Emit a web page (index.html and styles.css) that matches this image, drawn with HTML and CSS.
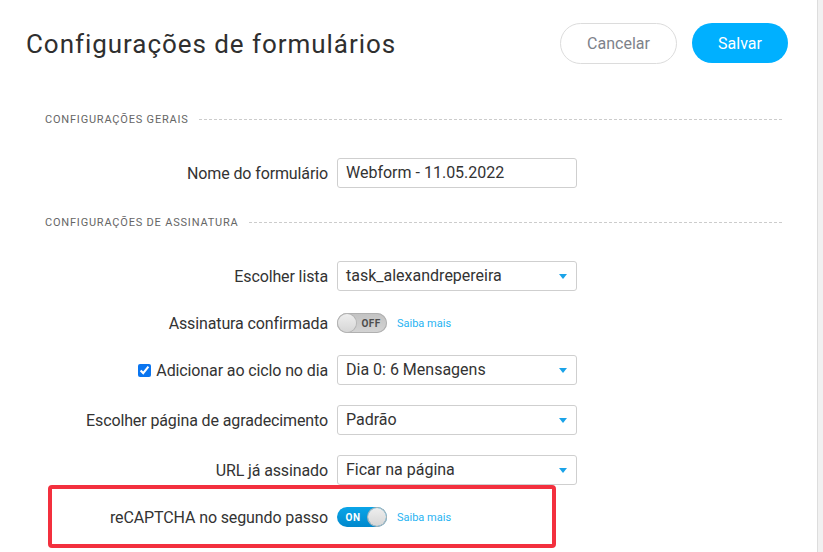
FILE: index.html
```html
<!DOCTYPE html>
<html lang="pt">
<head>
    <meta charset="UTF-8">
    <title>Configurações de formulários</title>
    <link rel="stylesheet" href="styles.css">
</head>
<body>
    <div class="page">
        <header class="header">
            <h1>Configurações de formulários</h1>
            <div class="actions">
                <button class="btn btn-cancel">Cancelar</button>
                <button class="btn btn-save">Salvar</button>
            </div>
        </header>

        <div class="content">
            <div class="section-title"><span>Configurações gerais</span></div>

            <div class="form-row first">
                <label class="label">Nome do formulário</label>
                <div class="field input">Webform - 11.05.2022</div>
            </div>

            <div class="section-title"><span>Configurações de assinatura</span></div>

            <div class="form-row first">
                <label class="label">Escolher lista</label>
                <div class="field select">task_alexandrepereira<span class="arrow"></span></div>
            </div>

            <div class="form-row short">
                <label class="label">Assinatura confirmada</label>
                <div class="toggle off"><span class="knob"></span><span class="state">OFF</span></div>
                <a class="more" href="#">Saiba mais</a>
            </div>

            <div class="form-row">
                <label class="label"><input type="checkbox" checked> Adicionar ao ciclo no dia</label>
                <div class="field select">Dia 0: 6 Mensagens<span class="arrow"></span></div>
            </div>

            <div class="form-row">
                <label class="label">Escolher página de agradecimento</label>
                <div class="field select">Padrão<span class="arrow"></span></div>
            </div>

            <div class="form-row">
                <label class="label">URL já assinado</label>
                <div class="field select">Ficar na página<span class="arrow"></span></div>
            </div>

            <div class="form-row short highlighted">
                <label class="label">reCAPTCHA no segundo passo</label>
                <div class="toggle on"><span class="state">ON</span><span class="knob"></span></div>
                <a class="more" href="#">Saiba mais</a>
            </div>
        </div>
    </div>
</body>
</html>
```

FILE: styles.css
```css
:root {
    --primary: #00b0ff;
    --text: #333;
    --border: #cfcfcf;
    --link: #27b3f2;
}

body {
    margin: 0;
    font-family: Roboto, 'Noto Sans', sans-serif;
    background: #f1f1f1;
    color: var(--text);
    overflow: hidden;
}

.page {
    width: 817px;
    height: 552px;
    background: #fff;
    border-right: 1px solid #ddd;
}

.header {
    display: flex;
    justify-content: space-between;
    align-items: center;
    height: 41px;
    padding: 23px 29px 0 26px;
}

h1 {
    margin: 0;
    font-size: 26px;
    font-weight: 400;
    letter-spacing: 0.95px;
    color: #2f2f2f;
}

.actions {
    display: flex;
    gap: 15px;
}

.btn {
    font-family: inherit;
    font-size: 16px;
    height: 41px;
    border-radius: 21px;
    cursor: pointer;
}

.btn-cancel {
    width: 117px;
    background: #fff;
    color: #7d828a;
    border: 1px solid #dcdcdc;
}

.btn-save {
    width: 96px;
    height: 40px;
    background: var(--primary);
    color: #fff;
    border: none;
}

.content {
    padding: 0 35px 0 45px;
}

.section-title {
    display: flex;
    align-items: center;
    height: 14px;
    margin-top: 48px;
    font-size: 11px;
    letter-spacing: 0.8px;
    text-transform: uppercase;
    color: #666;
}

.section-title + .form-row + .section-title {
    margin-top: 27px;
}

.section-title::after {
    content: "";
    flex: 1;
    margin-left: 10px;
    border-top: 1px dashed #ccc;
}

.form-row {
    display: flex;
    align-items: center;
    height: 30px;
    margin-top: 20px;
}

.form-row.first {
    margin-top: 32px;
}

.form-row.short {
    height: 24px;
}

.label {
    width: 283px;
    text-align: right;
    font-size: 16px;
    letter-spacing: -0.12px;
    color: var(--text);
    margin-right: 9px;
    display: flex;
    align-items: center;
    justify-content: flex-end;
}

.label input {
    width: 13px;
    height: 13px;
    margin: 0 5px 0 0;
    accent-color: #0a75f0;
}

.field {
    box-sizing: border-box;
    width: 240px;
    height: 30px;
    border: 1px solid var(--border);
    border-radius: 3px;
    padding: 0 8px;
    font-size: 16px;
    line-height: 28px;
    color: var(--text);
    position: relative;
}

.arrow {
    position: absolute;
    right: 9px;
    top: 12px;
    border-left: 4px solid transparent;
    border-right: 4px solid transparent;
    border-top: 5px solid #1aa3e8;
}

.toggle {
    box-sizing: border-box;
    width: 50px;
    height: 20px;
    border-radius: 10px;
    display: flex;
    align-items: center;
    padding: 0 1px;
    font-size: 10px;
    font-weight: 700;
}

.toggle .knob {
    width: 18px;
    height: 18px;
    border-radius: 50%;
    background: linear-gradient(#eee, #d6d6d6);
    box-shadow: 0 0 0 1px #b5b5b5;
}

.toggle .state {
    flex: 1;
    text-align: center;
    letter-spacing: 0.4px;
}

.toggle.off {
    background: linear-gradient(#c2c2c2, #d4d4d4);
    box-shadow: inset 0 0 0 1px #b0b0b0;
    color: #4d4d4d;
}

.toggle.on {
    background: linear-gradient(#0aa5e8, #0088cc);
    color: #fff;
}

.more {
    margin-left: 10px;
    font-size: 11px;
    color: var(--link);
    text-decoration: none;
}

.highlighted {
    position: relative;
}

/* anotação vermelha sobre a linha do reCAPTCHA */
.highlighted::before {
    content: "";
    position: absolute;
    left: 3px;
    top: -20px;
    width: 500px;
    height: 55px;
    border: 4px solid #f3303e;
    border-radius: 4px;
}
```
